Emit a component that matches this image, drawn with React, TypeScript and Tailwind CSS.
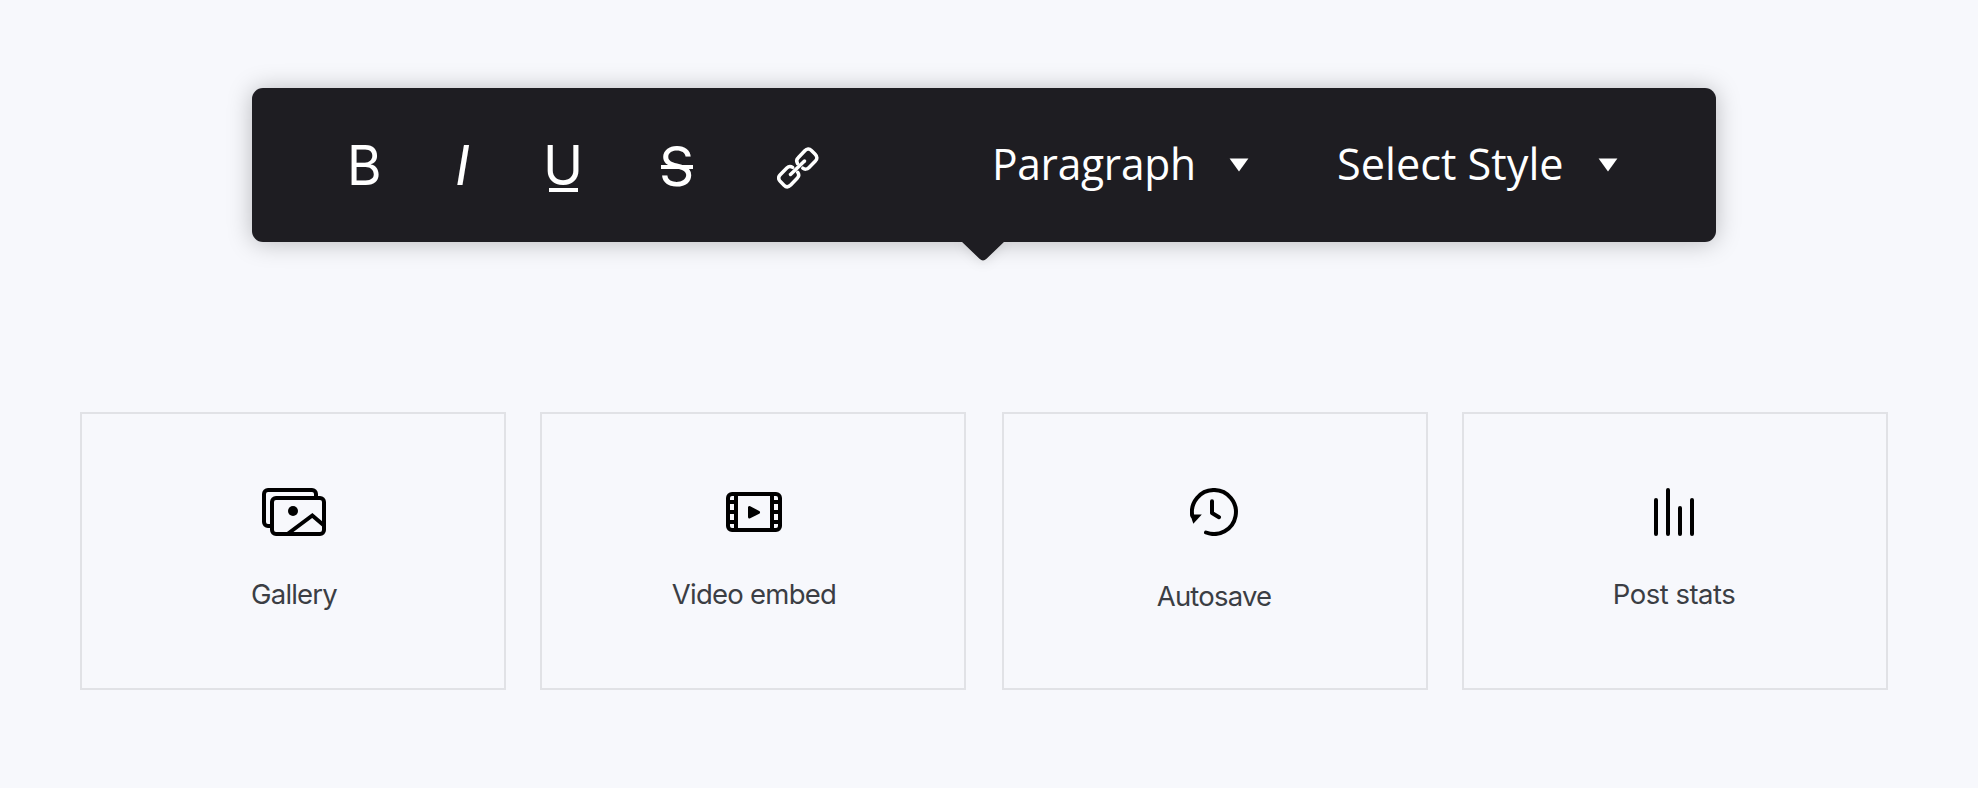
import type { ReactNode } from 'react'

function Caret() {
  return (
    <svg width="20" height="14" viewBox="0 0 20 14" fill="#fff">
      <path d="M.6.4h18.800L10 13.600z" />
    </svg>
  )
}

function LinkIcon() {
  return (
    <svg width="42" height="42" viewBox="0 0 42 42" fill="none" stroke="#fff" strokeWidth="3.500" strokeLinecap="round" strokeLinejoin="round">
      <path d="M13.500 27.500 27.500 14" />
      <path d="M20.500 16.500C19.300 14.600 19.600 12.400 21.200 10.800L27.800 3.800C29.800 1.700 32.400 1.500 34.400 3.400L38.200 7.200C40.400 9.400 40.400 12 38.400 14L31.800 20.800C30.200 22.400 27.600 22.600 25.800 21.200" />
      <path d="M20.700 25.300C22 27.100 21.900 29.600 20.200 31.300L13.700 38C11.600 40.100 9 40.200 7 38.200L3.400 34.600C1.300 32.400 1.200 29.800 3.200 27.700L9.800 21C11.400 19.400 13.800 19.100 15.600 20.400" />
    </svg>
  )
}

function GalleryIcon() {
  return (
    <svg width="64" height="48" viewBox="0 0 64 48" fill="none" stroke="#000" strokeWidth="4">
      <path d="M8 38H6a4 4 0 0 1-4-4V6a4 4 0 0 1 4-4h44a4 4 0 0 1 4 4v2" />
      <rect x="10" y="10" width="52" height="36" rx="4" />
      <path d="M25.500 46 50.300 27.500 62 37.500" />
      <circle cx="31" cy="23" r="5" fill="#000" stroke="none" />
    </svg>
  )
}

function VideoIcon() {
  return (
    <svg width="56" height="40" viewBox="0 0 56 40" fill="none" stroke="#000" strokeWidth="4">
      <rect x="2" y="2" width="52" height="36" rx="4" />
      <path d="M10 2v36M46 2v36M2 10h8M2 20h8M2 30h8M46 10h8M46 20h8M46 30h8" />
      <path d="M23.500 15.500v9.500l9-4.700z" fill="#000" strokeWidth="3" strokeLinejoin="round" />
    </svg>
  )
}

function HistoryIcon() {
  return (
    <svg width="48" height="48" viewBox="0 0 48 48" fill="none" stroke="#000" strokeWidth="4" strokeLinecap="round" strokeLinejoin="round">
      <path d="M2.300 28A22 22 0 1 1 16 44.500" />
      <path d="M22 13.200V25l7 4.200" />
      <path d="M.3 26.600H11.800L3.300 35.700z" fill="#000" stroke="none" />
    </svg>
  )
}

function StatsIcon() {
  return (
    <svg width="40" height="48" viewBox="0 0 40 48" fill="none" stroke="#000" strokeWidth="4" strokeLinecap="round">
      <path d="M2 12v34M14 2v44M26 20v26M38 12v34" />
    </svg>
  )
}

function Card({ label, icon, className }: { label: string; icon: ReactNode; className: string }) {
  return (
    <div className={`flex h-[278px] w-[426px] flex-col items-center border-2 border-[#e1e2e6] pt-[74px] ${className}`}>
      <div className="flex h-12 items-center">{icon}</div>
      <span className="text-[27.500px] leading-[36px] text-[#3b3e44]">{label}</span>
    </div>
  )
}

export default function App() {
  return (
    <main className="flex h-[788px] w-[1978px] flex-col bg-[#f7f8fc] font-['Inter',sans-serif]">
      <div className="relative ml-[252px] mt-[87.500px] flex h-[154px] w-[1464px] items-start rounded-[11px] bg-[#1e1d22] text-white shadow-[0_1px_24px_rgba(0,0,0,0.25)]">
        <div className="flex h-full w-[615px] items-start pl-[95px] pt-[44.500px] text-[55px] leading-[67px]">
          <button className="w-[108px] text-left">
            <span className="inline-block origin-left scale-x-[0.96]">B</span>
          </button>
          <button className="w-[88px] text-left italic">I</button>
          <button className="relative w-[116px] text-left">
            <span className="inline-block origin-left scale-x-[0.98]">U</span>
            <span className="absolute left-[6px] top-[56px] h-1 w-[29px] bg-white" />
          </button>
          <button className="relative mt-[1px] w-[118px] text-left">
            S
            <span className="absolute left-[2px] top-[32px] h-1 w-[32px] bg-white" />
          </button>
          <button className="mt-[14.500px]">
            <LinkIcon />
          </button>
        </div>
        <div className="flex items-start pl-[123px] pt-[45.500px] font-['Open_Sans',sans-serif] text-[44.500px] leading-[60px]">
          <button className="flex w-[344px] items-start">
            <span className="w-[239px] origin-left translate-x-[2px] scale-x-[0.955] text-left tracking-[-0.3px]">Paragraph</span>
            <span className="mt-[24.500px]"><Caret /></span>
          </button>
          <button className="flex items-start">
            <span className="w-[264px] origin-left translate-x-[3px] scale-x-[0.972] whitespace-nowrap text-left">Select Style</span>
            <span className="mt-[24.500px]"><Caret /></span>
          </button>
        </div>
        <div className="absolute left-[689px] top-[153px] h-[45px] w-[84px] overflow-hidden px-5">
          <svg className="drop-shadow-[0_2px_6px_rgba(0,0,0,0.1)]" width="44" height="21" viewBox="0 0 44 21">
            <path d="M0 0H44L25.500 17.800Q22 21.200 18.500 17.800Z" fill="#1e1d22" />
          </svg>
        </div>
      </div>
      <div className="ml-20 mt-[170.500px] flex">
        <Card label="Gallery" icon={<GalleryIcon />} className="gap-10 pl-[2px] tracking-[-0.8px]" />
        <div className="w-[34px]" />
        <Card label="Video embed" icon={<VideoIcon />} className="gap-10 pl-[2px] tracking-[-0.75px]" />
        <div className="w-9" />
        <Card label="Autosave" icon={<HistoryIcon />} className="gap-[42px] pr-[2px] tracking-[-0.8px]" />
        <div className="w-[34px]" />
        <Card label="Post stats" icon={<StatsIcon />} className="gap-10 pr-[2px] tracking-[-0.5px]" />
      </div>
    </main>
  )
}
